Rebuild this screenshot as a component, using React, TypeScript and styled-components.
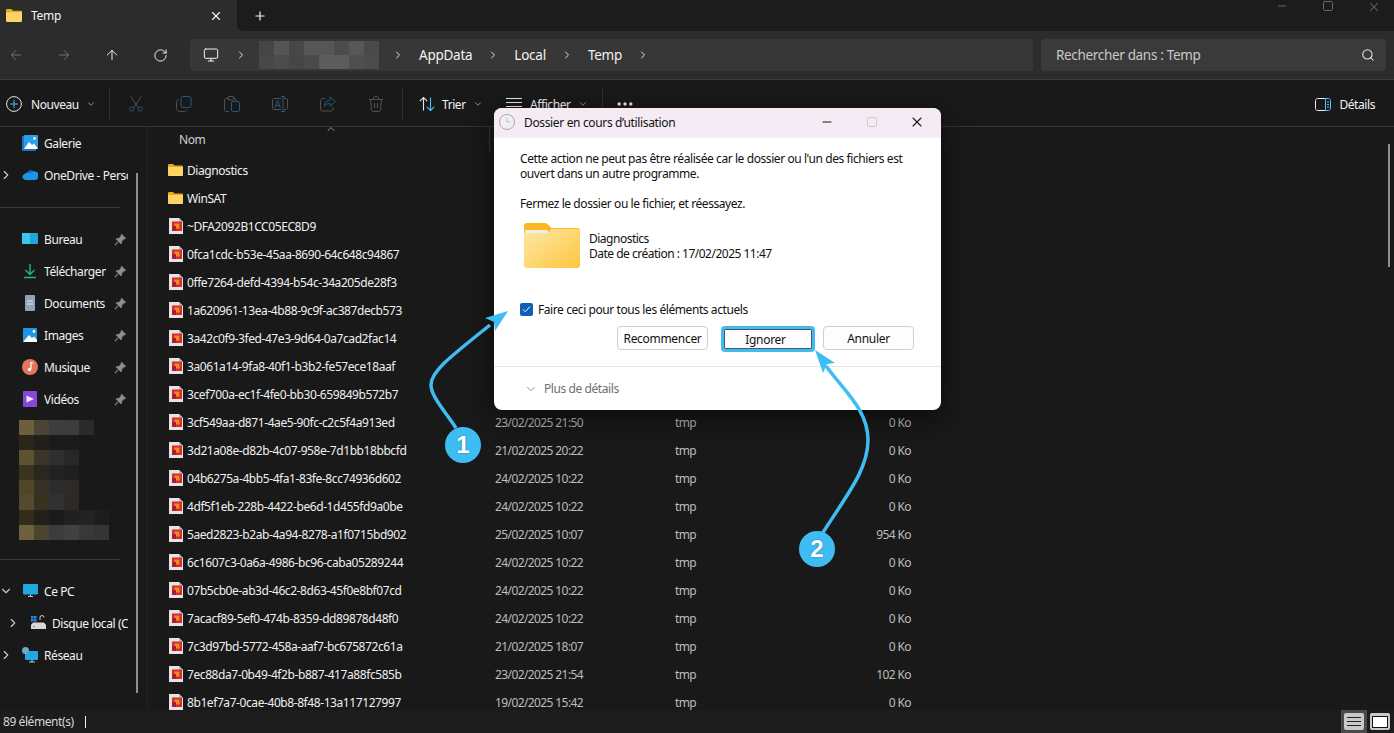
import React from 'react';
import styled, { createGlobalStyle } from 'styled-components';
import {
  ArrowLeft,
  ArrowRight,
  ArrowUp,
  ChevronDown,
  ChevronRight,
  ChevronUp,
  Minus,
  Monitor,
  MoreHorizontal,
  Plus,
  RotateCw,
  Search,
  Square,
  X,
} from 'lucide-react';

const GlobalStyle = createGlobalStyle`
  html, body, #root { margin: 0; height: 100%; }
  body {
    background: #191919;
    font-family: "Noto Sans", "Open Sans", "Liberation Sans", sans-serif;
    font-size: 12px;
    letter-spacing: -0.42px;
    color: #f2f2f2;
    overflow: hidden;
  }
`;

const Window = styled.div`
  position: relative;
  display: flex;
  flex-direction: column;
  width: 1394px;
  height: 733px;
  overflow: hidden;
`;

/* title strip */
const TabStrip = styled.div`
  display: flex;
  height: 31px;
  background: #2c2c2c;
`;

const Tab = styled.div`
  display: flex;
  align-items: center;
  width: 237px;
  padding: 0 14px 0 6px;
  box-sizing: border-box;
  gap: 9px;
  color: #f5f5f5;
  background: #2c2c2c;
  letter-spacing: -0.25px;
`;

const TabTitle = styled.span`
  flex: 1;
`;

const StripRest = styled.div`
  flex: 1;
  display: flex;
  align-items: flex-start;
  background: #1c1c1c;
  border-radius: 0 0 0 6px;
  color: #f5f5f5;
`;

const NewTab = styled.div`
  display: flex;
  align-items: center;
  justify-content: center;
  width: 46px;
  height: 31px;
`;

const WindowControls = styled.div`
  margin-left: auto;
  display: flex;
  gap: 6px;
  color: #6a6a6a;
`;

const WindowControl = styled.div`
  display: flex;
  justify-content: center;
  width: 40px;
  height: 12px;
`;

/* address bar */
const NavBar = styled.div`
  display: flex;
  align-items: center;
  height: 48px;
  padding: 0 8px 0 0;
  background: #2c2c2c;
  border-bottom: 1px solid #3b3b3b;
`;

const NavButtons = styled.div`
  display: flex;
  margin-left: -8px;
`;

const NavButton = styled.div<{ $off?: boolean }>`
  display: flex;
  align-items: center;
  justify-content: center;
  width: 48px;
  color: ${(p) => (p.$off ? '#6f6f6f' : '#ececec')};
`;

const AddressBar = styled.div`
  flex: 1;
  display: flex;
  align-items: center;
  height: 32px;
  margin: 0 8px 0 6px;
  padding-left: 13px;
  background: #373737;
  border-radius: 4px;
  font-size: 13.5px;
  letter-spacing: -0.25px;
  color: #f2f2f2;
`;

const Crumb = styled.span`
  margin: 0 15px;
`;

const CrumbArrow = styled(ChevronRight)<{ $before?: number }>`
  flex: none;
  margin-left: ${(p) => p.$before ?? 0}px;
  color: #e0e0e0;
`;

const Mosaic = styled.div<{ $cols: number; $size: number; $height: number }>`
  display: grid;
  grid-template-columns: repeat(${(p) => p.$cols}, ${(p) => p.$size}px);
  grid-auto-rows: ${(p) => p.$height}px;
`;

const CrumbMosaic = styled(Mosaic)`
  margin: 0 13px 0 12px;
`;

const Pixel = styled.div<{ $color: string }>`
  background: ${(p) => p.$color};
`;

const SearchBox = styled.div`
  display: flex;
  align-items: center;
  justify-content: space-between;
  width: 345px;
  height: 32px;
  padding: 0 11px 0 15px;
  box-sizing: border-box;
  background: #3a3a3a;
  border-radius: 4px;
  font-size: 13.5px;
  letter-spacing: -0.33px;
  color: #c9c9c9;
`;

/* command bar */
const Toolbar = styled.div`
  display: flex;
  align-items: center;
  height: 44px;
  padding-top: 2px;
  background: #191919;
  border-bottom: 1px solid #333;
`;

const Divider = styled.div`
  width: 1px;
  height: 32px;
  margin: 0 2px;
  background: #2e2e2e;
`;

const ToolText = styled.div<{ $width?: number; $pad?: number; $gap?: number; $end?: number }>`
  display: flex;
  align-items: center;
  gap: ${(p) => p.$gap ?? 5}px;
  width: ${(p) => (p.$width ? `${p.$width}px` : 'auto')};
  padding: 0 ${(p) => p.$end ?? 0}px 0 ${(p) => p.$pad ?? 0}px;
  box-sizing: border-box;
  color: #f2f2f2;
`;

const ToolLabel = styled.span<{ $before?: number }>`
  margin-left: ${(p) => p.$before ?? 0}px;
`;

const Caret = styled(ChevronDown)`
  color: #a8a8a8;
  margin-left: 2px;
`;

const ToolIcon = styled.div<{ $shift?: number }>`
  display: flex;
  align-items: center;
  justify-content: center;
  width: 48px;
  margin-left: ${(p) => p.$shift ?? 0}px;
`;

const Spacer = styled.div`
  flex: 1;
`;

/* body */
const Main = styled.div`
  flex: 1;
  display: flex;
  min-height: 0;
`;

const Sidebar = styled.nav`
  position: relative;
  flex: none;
  width: 147px;
  border-right: 1px solid #242424;
  box-sizing: content-box;
  overflow: hidden;
`;

const SideList = styled.div`
  width: 128px;
`;

const SideItem = styled.div<{ $indent?: number }>`
  position: relative;
  display: flex;
  align-items: center;
  height: 32px;
  padding-left: ${(p) => 22 + (p.$indent ?? 0)}px;
  gap: 6px;
  box-sizing: border-box;
  color: #f2f2f2;
`;

const Expander = styled.span<{ $indent?: number }>`
  position: absolute;
  left: ${(p) => (p.$indent ?? 0) - 1}px;
  display: flex;
  color: #c8c8c8;
`;

const SideLabel = styled.span`
  flex: 1;
  min-width: 0;
  overflow: hidden;
  white-space: nowrap;
`;

const PinSlot = styled.span`
  flex: none;
  display: flex;
  width: 16px;
  justify-content: center;
`;

const SideRule = styled.div`
  width: 120px;
  height: 1px;
  margin: 16px 0 15px;
  background: #3a3a3a;
`;

const BlurBlock = styled.div`
  height: 128px;
  padding: 5px 0 0 19px;
  box-sizing: border-box;
`;

const Scrollbar = styled.div<{ $top: number; $height: number; $right: number }>`
  position: absolute;
  top: ${(p) => p.$top}px;
  right: ${(p) => p.$right}px;
  width: 2px;
  height: ${(p) => p.$height}px;
  background: #8f8f8f;
`;

const Content = styled.section`
  position: relative;
  flex: 1;
  min-width: 0;
  overflow: hidden;
`;

const HeaderRow = styled.div`
  position: relative;
  height: 26px;
  padding-left: 31px;
  line-height: 26px;
  color: #d0d0d0;
`;

const SortCaret = styled(ChevronUp)`
  position: absolute;
  left: 177px;
  top: -4px;
  color: #b8b8b8;
`;

const ColumnEdge = styled.div`
  position: absolute;
  left: 341px;
  top: 0;
  width: 1px;
  height: 26px;
  background: #3a3a3a;
`;

const FileRows = styled.div`
  padding-top: 3px;
`;

const FileRow = styled.div`
  display: grid;
  grid-template-columns: 19px 308px 180px 150px 86px;
  align-items: center;
  height: 28px;
  padding-left: 20px;
  white-space: nowrap;
`;

const FileName = styled.span`
  color: #f0f0f0;
`;

const FileMeta = styled.span<{ $right?: boolean }>`
  color: #bdbdbd;
  letter-spacing: -0.6px;
  text-align: ${(p) => (p.$right ? 'right' : 'left')};
`;

/* status bar */
const StatusBar = styled.div`
  display: flex;
  align-items: center;
  height: 23px;
  padding-left: 3px;
  background: #1c1c1c;
  color: #d8d8d8;
`;

const StatusBreak = styled.div`
  width: 1px;
  height: 12px;
  margin-left: 11px;
  background: #f0f0f0;
`;

const ViewButton = styled.div<{ $active?: boolean }>`
  display: flex;
  align-items: center;
  justify-content: center;
  width: ${(p) => (p.$active ? 26 : 24)}px;
  height: 23px;
  margin-right: ${(p) => (p.$active ? 1 : 2)}px;
  background: ${(p) => (p.$active ? '#4a4a4a' : 'transparent')};
`;

const ViewGlyph = styled.div`
  display: flex;
  align-items: center;
  justify-content: center;
  width: 20px;
  height: 17px;
  border-radius: 2px;
  background: #c8c8c8;
`;

const PaneGlyph = styled.div`
  width: 14px;
  height: 10px;
  background: #fff;
  border: 1px solid #111;
`;

/* dialog */
const Dialog = styled.div`
  position: absolute;
  left: 494px;
  top: 108px;
  width: 447px;
  background: #fff;
  border-radius: 8px;
  overflow: hidden;
  color: #111;
  box-shadow: 0 8px 28px rgba(0, 0, 0, 0.55);
`;

const DialogTitle = styled.div`
  display: flex;
  align-items: center;
  height: 30px;
  padding: 0 2px 2px 5px;
  box-sizing: border-box;
  gap: 9px;
  background: #f4ebf5;
  color: #111;
  letter-spacing: -0.35px;
`;

const DialogTitleText = styled.span`
  flex: 1;
`;

const DialogControls = styled.div`
  display: flex;
`;

const DialogControl = styled.div<{ $off?: boolean }>`
  display: flex;
  align-items: center;
  justify-content: center;
  width: 45px;
  color: ${(p) => (p.$off ? '#c8c8c8' : '#1a1a1a')};
`;

const DialogBody = styled.div`
  padding: 13px 27px 16px 26px;
  line-height: 15px;
`;

const Message = styled.p<{ $gap?: number }>`
  margin: ${(p) => p.$gap ?? 0}px 0 0;
  white-space: nowrap;
`;

const ItemInfo = styled.div`
  display: flex;
  align-items: center;
  gap: 9px;
  margin: 12px 0 0 4px;
  letter-spacing: -0.5px;
`;

const CheckRow = styled.label`
  display: flex;
  align-items: center;
  gap: 5px;
  margin-top: 34px;
  height: 14px;
`;

const CheckBox = styled.span`
  display: flex;
  align-items: center;
  justify-content: center;
  width: 13px;
  height: 13px;
  border-radius: 2px;
  background: #0f5fb8;
`;

const ButtonRow = styled.div`
  display: flex;
  justify-content: flex-end;
  align-items: flex-start;
  margin-top: 10px;
  height: 24px;
`;

const DialogButton = styled.div<{ $marked?: boolean }>`
  display: flex;
  align-items: center;
  justify-content: center;
  box-sizing: border-box;
  width: ${(p) => (p.$marked ? 94 : 91)}px;
  height: ${(p) => (p.$marked ? 26 : 24)}px;
  margin: ${(p) => (p.$marked ? '0 8px 0 13px' : 0)};
  padding-right: ${(p) => (p.$marked ? 5 : 0)}px;
  border: ${(p) => (p.$marked ? '3px solid #3fbdf3' : '1px solid #cfcfcf')};
  border-radius: 4px;
  background: #fdfdfd;
  letter-spacing: -0.3px;
  box-shadow: ${(p) => (p.$marked ? 'inset 0 0 0 1px #555' : 'none')};
`;

const DialogFooter = styled.div`
  display: flex;
  align-items: center;
  height: 43px;
  padding-left: 30px;
  gap: 6px;
  border-top: 1px solid #e6e6e6;
  color: #6e6e6e;
`;

/* annotation overlay */
const Annotation = styled.svg`
  position: absolute;
  left: 0;
  top: 0;
  width: 1394px;
  height: 733px;
  pointer-events: none;
`;

const Badge = styled.div<{ $x: number; $y: number }>`
  position: absolute;
  left: ${(p) => p.$x - 18}px;
  top: ${(p) => p.$y - 18}px;
  display: flex;
  align-items: center;
  justify-content: center;
  width: 36px;
  height: 36px;
  border-radius: 50%;
  background: #3fbdf3;
  color: #fff;
  font-family: "Liberation Sans", sans-serif;
  font-size: 24px;
  font-weight: 700;
  letter-spacing: 0;
  text-shadow: 0 0 2px rgba(0, 60, 90, 0.5);
`;

/* drawn icons */
const FolderIcon = ({ width = 15, height = 12 }: { width?: number; height?: number }) => (
  <svg width={width} height={height} viewBox="1 2.600 14 11.200" preserveAspectRatio="none">
    <path d="M1 3.600C1 3 1.400 2.600 2 2.600h3.600l1.600 1.400H14c.6 0 1 .4 1 1v1H1z" fill="#e9a91c" />
    <path d="M1 5.400h14v7.400c0 .6-.4 1-1 1H2c-.6 0-1-.4-1-1z" fill="#fcd364" />
  </svg>
);

const BigFolder = () => (
  <svg width="56" height="45" viewBox="0 0 56 45">
    <defs>
      <linearGradient id="bigFolder" x1="0" y1="0" x2="1" y2="1">
        <stop offset="0" stopColor="#fde8a8" />
        <stop offset="1" stopColor="#fdc63c" />
      </linearGradient>
    </defs>
    <path d="M0 3c0-2 1-3 3-3h17c2 0 3 .6 4.500 2l3 3H53c2 0 3 1 3 3v6H0z" fill="#fcb81e" />
    <rect x="1" y="7" width="23" height="3" fill="#eee" />
    <path d="M0 10h24l3-4h26c2 0 3 1 3 3v33c0 2-1 3-3 3H3c-2 0-3-1-3-3z" fill="url(#bigFolder)" />
  </svg>
);

const TmpIcon = () => (
  <svg width="16" height="16" viewBox="0 0 16 16">
    <path d="M1 0h10l4 4v12H1z" fill="#e4e4e4" />
    <path d="M11 0l4 4h-4z" fill="#bdbdbd" />
    <rect x="4" y="3.500" width="10" height="9.500" fill="#d92b2b" />
    <rect x="6.500" y="5.500" width="5" height="5" fill="#f08a24" />
    <rect x="4" y="8" width="4" height="5" fill="#a81e2e" />
  </svg>
);

const PinIcon = () => (
  <svg width="13" height="13" viewBox="0 0 12 12">
    <path d="M7 .8l4.200 4.200-1 .8-.8-.2L7.200 7.800l.2 1.600-1 1L1.600 5.600l1-1 1.600.2L6.400 2.600l-.2-.8z" fill="#8c8c8c" />
    <path d="M3.500 8.500L.8 11.200" stroke="#8c8c8c" />
  </svg>
);

const GalleryIcon = () => (
  <svg width="16" height="16" viewBox="0 0 16 16">
    <rect x="0" y="1" width="14" height="15" rx="1" fill="#1b74c8" />
    <rect x="2" y="0" width="14" height="14" rx="1" fill="#2aa0ea" />
    <path d="M2 14l5-7 3 3 2-1.500L16 14z" fill="#fff" />
    <circle cx="12.500" cy="3.500" r="1.300" fill="#fff" />
  </svg>
);

const ImagesIcon = () => (
  <svg width="16" height="16" viewBox="0 0 16 16">
    <rect x="1" y="1" width="14" height="14" rx="1" fill="#2294e6" />
    <path d="M1 15l6-7 3 3 2-1.500 3 3.500v2z" fill="#fff" />
    <circle cx="12" cy="4.500" r="1.400" fill="#fff" />
  </svg>
);

const CloudIcon = () => (
  <svg width="16" height="16" viewBox="0 0 16 16">
    <path d="M6 4.500a4 4 0 0 1 6.800 1.500A3 3 0 0 1 16 9l-4-.5L8 6z" fill="#0f6fc6" />
    <path d="M3.300 13A3.200 3.200 0 0 1 3 6.700 4 4 0 0 1 9 6.500 3.500 3.500 0 0 1 16 10c0 1.800-1 3-3 3z" fill="#1f95e8" />
  </svg>
);

const DesktopIcon = () => (
  <svg width="16" height="16" viewBox="0 0 16 16">
    <rect x="0" y="2" width="16" height="11" rx="1" fill="#1fa6dc" />
    <rect x="0" y="2" width="8" height="11" fill="#3cc4ec" />
  </svg>
);

const DownloadIcon = () => (
  <svg width="16" height="16" viewBox="0 0 16 16" fill="none" stroke="#22b58a" strokeWidth="1.400">
    <path d="M8 1v10M3.500 7L8 11.500 12.500 7M2 14.500h12" />
  </svg>
);

const DocsIcon = () => (
  <svg width="16" height="16" viewBox="0 0 16 16">
    <rect x="3" y="0" width="10" height="16" rx="1" fill="#8ca3b8" />
    <path d="M5 6h6M5 9h6" stroke="#e6edf2" />
  </svg>
);

const MusicIcon = () => (
  <svg width="16" height="16" viewBox="0 0 16 16">
    <circle cx="8" cy="8" r="8" fill="#e07560" />
    <path d="M9 3v7" stroke="#fff" strokeWidth="1.200" />
    <path d="M9 3l2.500 1.500" stroke="#fff" />
    <circle cx="7.500" cy="10.500" r="1.700" fill="#fff" />
  </svg>
);

const VideoIcon = () => (
  <svg width="16" height="16" viewBox="0 0 16 16">
    <rect x="1" y="0" width="14" height="16" rx="1" fill="#8548d8" />
    <path d="M4.500 4.500L12 8l-7.500 3.500z" fill="#efe4ff" />
  </svg>
);

const PcIcon = () => (
  <svg width="16" height="16" viewBox="0 0 16 16">
    <rect x="1" y="1" width="15" height="10.500" rx="1" fill="#21a8e0" />
    <path d="M6 13.500h5M8.500 11.500v2" stroke="#b8c4cc" strokeWidth="1.200" />
  </svg>
);

const DriveIcon = () => (
  <svg width="16" height="16" viewBox="0 0 16 16">
    <rect x="1" y="1" width="2.500" height="2.500" fill="#2a8ce0" />
    <rect x="4" y="1" width="2.500" height="2.500" fill="#2a8ce0" />
    <rect x="1" y="4" width="2.500" height="2.500" fill="#2a8ce0" />
    <rect x="4" y="4" width="2.500" height="2.500" fill="#2a8ce0" />
    <path d="M10 5V2.500a2 2 0 0 1 4 0" fill="none" stroke="#ccc" />
    <path d="M1 10l2-2.500h11l2 2.500v4H1z" fill="#d8d8d8" />
    <rect x="3" y="11" width="2" height="1" fill="#48c048" />
  </svg>
);

const NetworkIcon = () => (
  <svg width="16" height="16" viewBox="0 0 16 16">
    <rect x="3" y="4" width="13" height="9" rx="1" fill="#21a8e0" />
    <path d="M7 15h6M10 13v2" stroke="#b8c4cc" strokeWidth="1.200" />
    <circle cx="3.500" cy="3.500" r="3.500" fill="#6fa8c8" />
  </svg>
);

const ClockIcon = () => (
  <svg width="16" height="16" viewBox="0 0 16 16">
    <circle cx="8" cy="8" r="7.500" fill="#f0f0f0" stroke="#a8a8a8" />
    <path d="M8 3.500V8h3" fill="none" stroke="#bbb" />
  </svg>
);

const GREY = '#505050';
const DIMBLUE = '#24577a';

const CutIcon = () => (
  <svg width="16" height="16" viewBox="0 0 16 16" fill="none" strokeWidth="1">
    <path d="M3 .5l7 11M13 .5l-7 11" stroke={GREY} />
    <circle cx="3.800" cy="13" r="2.200" stroke={DIMBLUE} />
    <circle cx="12.200" cy="13" r="2.200" stroke={DIMBLUE} />
  </svg>
);

const CopyIcon = () => (
  <svg width="16" height="16" viewBox="0 0 16 16" fill="none" strokeWidth="1">
    <rect x="5" y=".5" width="10" height="11" rx="2" stroke={DIMBLUE} />
    <path d="M3 3.500c-1.500.5-2.500 1-2.500 3v6c0 1.500 1 3 3 3h5c1.500 0 2.500-1 3-2" stroke={GREY} />
  </svg>
);

const PasteIcon = () => (
  <svg width="16" height="16" viewBox="0 0 16 16" fill="none" strokeWidth="1">
    <path d="M5 2.500H2c-1 0-1.500.5-1.500 1.500v10c0 1 .5 1.500 1.500 1.500h3M12 5V4c0-1-.5-1.500-1.500-1.500H9" stroke={GREY} />
    <rect x="4" y=".5" width="6" height="3.500" rx="1" stroke={GREY} />
    <rect x="7.500" y="5.500" width="8" height="10" rx="1.500" stroke={DIMBLUE} />
  </svg>
);

const RenameIcon = () => (
  <svg width="16" height="16" viewBox="0 0 16 16" fill="none" strokeWidth="1">
    <path d="M9 2.500H2C1 2.500.5 3 .5 4v8c0 1 .5 1.500 1.500 1.500h7M12 2.500h2c1 0 1.500.5 1.500 1.500v8c0 1-.5 1.500-1.500 1.500h-2" stroke={GREY} />
    <path d="M9 .5h4M9 15.500h4M11 .5v15" stroke={DIMBLUE} />
    <text x="2.500" y="11.500" fontSize="10" fill={DIMBLUE} stroke="none" fontFamily="Noto Sans">A</text>
  </svg>
);

const ShareIcon = () => (
  <svg width="16" height="16" viewBox="0 0 16 16" fill="none" strokeWidth="1">
    <path d="M5 2.500H2.500c-1 0-2 .5-2 2v8.500c0 1.500 1 2 2 2h8.500c1 0 2-.5 2-2v-2" stroke={GREY} />
    <path d="M10 .8l5.500 4.700-5.500 4.700V7.500c-3 0-4.500 1-5.500 3 0-4 2-6 5.500-6.500z" stroke={DIMBLUE} />
  </svg>
);

const TrashIcon = () => (
  <svg width="16" height="16" viewBox="0 0 16 16" fill="none" stroke={GREY} strokeWidth="1">
    <path d="M1 3.500h14M5.500 3.500V2c0-1 .5-1.500 1.500-1.500h2c1 0 1.500.5 1.500 1.500v1.500" />
    <path d="M2.500 3.500l1 10.500c.1 1 .7 1.500 1.500 1.500h6c.8 0 1.400-.5 1.500-1.500l1-10.500M6.500 7v5M9.500 7v5" />
  </svg>
);

const SortIcon = () => (
  <svg width="16" height="16" viewBox="0 0 16 16" fill="none" strokeWidth="1.100">
    <path d="M4.500 14.500V1.500M.8 5.200l3.700-3.700 3.700 3.700" stroke="#e8e8e8" />
    <path d="M11.500 1.500v13M7.800 10.800l3.700 3.700 3.700-3.700" stroke="#4cc2ff" />
  </svg>
);

const ViewIcon = () => (
  <svg width="16" height="12" viewBox="0 0 16 12" stroke="#e8e8e8" strokeWidth="1">
    <path d="M0 .5h16M0 4.500h16M0 8.500h16" />
  </svg>
);

const DetailsIcon = () => (
  <svg width="16" height="13" viewBox="0 0 16 13" fill="none" strokeWidth="1">
    <path d="M10.500.5H2.500c-1 0-2 1-2 2v8c0 1 1 2 2 2h8" stroke="#e8e8e8" />
    <path d="M10.500.5h3c1 0 2 1 2 2v8c0 1-1 2-2 2h-3zM12 4h2M12 6.500h2M12 9h2" stroke="#4cc2ff" />
  </svg>
);

const NewIcon = () => (
  <svg width="16" height="16" viewBox="0 0 16 16" fill="none" strokeWidth="1">
    <circle cx="8" cy="8" r="7.400" stroke="#e8e8e8" />
    <path d="M8 4v8M4 8h8" stroke="#4cc2ff" />
  </svg>
);

const ListGlyph = () => (
  <svg width="14" height="9" viewBox="0 0 14 9" stroke="#222" strokeWidth="1">
    <path d="M0 .5h14M0 4.500h14M0 8.500h14" />
  </svg>
);

const breadcrumbPixels = [
  '#454545', '#555', '#474747', '#565656', '#565656', '#4c4c4c', '#575757', '#4a4a4a',
  '#484848', '#4c4c4c', '#464646', '#4a4a4a', '#5c5c5c', '#5c5c5c', '#4f4f4f', '#4c4c4c',
];

const sidebarPixels = [
  ['#6e5f3c', '#4a4436', '#3d3d3d', '#3c3c3c', '#2a2a2a', '#191919', '#191919'],
  ['#2a2619', '#211f1a', '#1b1b1b', '#1b1b1b', '#191919', '#191919', '#191919'],
  ['#5e5233', '#3a3528', '#2e2f31', '#272727', '#191919', '#191919', '#191919'],
  ['#3a331f', '#2a271e', '#222223', '#201f1e', '#191919', '#191919', '#191919'],
  ['#4f4529', '#363026', '#2d2c2c', '#2d2a28', '#191919', '#191919', '#191919'],
  ['#544a2d', '#37321f', '#313133', '#2c2927', '#191919', '#191919', '#191919'],
  ['#332c1b', '#22201a', '#1b1b1d', '#212121', '#232323', '#1d1d1d', '#191919'],
  ['#6e603c', '#4a4431', '#3c3b40', '#414141', '#38383b', '#353535', '#191919'],
].flat();

type Row = { name: string; folder?: boolean; date?: string; size?: string };

const rows: Row[] = [
  { name: 'Diagnostics', folder: true },
  { name: 'WinSAT', folder: true },
  { name: '~DFA2092B1CC05EC8D9' },
  { name: '0fca1cdc-b53e-45aa-8690-64c648c94867' },
  { name: '0ffe7264-defd-4394-b54c-34a205de28f3' },
  { name: '1a620961-13ea-4b88-9c9f-ac387decb573' },
  { name: '3a42c0f9-3fed-47e3-9d64-0a7cad2fac14' },
  { name: '3a061a14-9fa8-40f1-b3b2-fe57ece18aaf' },
  { name: '3cef700a-ec1f-4fe0-bb30-659849b572b7' },
  { name: '3cf549aa-d871-4ae5-90fc-c2c5f4a913ed', date: '23/02/2025 21:50', size: '0 Ko' },
  { name: '3d21a08e-d82b-4c07-958e-7d1bb18bbcfd', date: '21/02/2025 20:22', size: '0 Ko' },
  { name: '04b6275a-4bb5-4fa1-83fe-8cc74936d602', date: '24/02/2025 10:22', size: '0 Ko' },
  { name: '4df5f1eb-228b-4422-be6d-1d455fd9a0be', date: '24/02/2025 10:22', size: '0 Ko' },
  { name: '5aed2823-b2ab-4a94-8278-a1f0715bd902', date: '25/02/2025 10:07', size: '954 Ko' },
  { name: '6c1607c3-0a6a-4986-bc96-caba05289244', date: '24/02/2025 10:22', size: '0 Ko' },
  { name: '07b5cb0e-ab3d-46c2-8d63-45f0e8bf07cd', date: '24/02/2025 10:22', size: '0 Ko' },
  { name: '7acacf89-5ef0-474b-8359-dd89878d48f0', date: '24/02/2025 10:22', size: '0 Ko' },
  { name: '7c3d97bd-5772-458a-aaf7-bc675872c61a', date: '21/02/2025 18:07', size: '0 Ko' },
  { name: '7ec88da7-0b49-4f2b-b887-417a88fc585b', date: '23/02/2025 21:54', size: '102 Ko' },
  { name: '8b1ef7a7-0cae-40b8-8f48-13a117127997', date: '19/02/2025 15:42', size: '0 Ko' },
];

const quickAccess = [
  { label: 'Bureau', icon: <DesktopIcon /> },
  { label: 'Téléchargements', icon: <DownloadIcon /> },
  { label: 'Documents', icon: <DocsIcon /> },
  { label: 'Images', icon: <ImagesIcon /> },
  { label: 'Musique', icon: <MusicIcon /> },
  { label: 'Vidéos', icon: <VideoIcon /> },
];

function App() {
  return (
    <Window>
      <GlobalStyle />
      <TabStrip>
        <Tab>
          <FolderIcon width={16} height={13} />
          <TabTitle>Temp</TabTitle>
          <X size={14} strokeWidth={2} />
        </Tab>
        <StripRest>
          <NewTab>
            <Plus size={14} strokeWidth={2} />
          </NewTab>
          <WindowControls>
            <WindowControl>
              <Minus size={12} strokeWidth={2} />
            </WindowControl>
            <WindowControl>
              <Square size={12} strokeWidth={2} />
            </WindowControl>
            <WindowControl>
              <X size={14} strokeWidth={1.8} />
            </WindowControl>
          </WindowControls>
        </StripRest>
      </TabStrip>

      <NavBar>
        <NavButtons>
          <NavButton $off><ArrowLeft size={16} strokeWidth={1.5} /></NavButton>
          <NavButton $off><ArrowRight size={16} strokeWidth={1.5} /></NavButton>
          <NavButton><ArrowUp size={16} strokeWidth={1.5} /></NavButton>
          <NavButton><RotateCw size={15} strokeWidth={1.6} /></NavButton>
        </NavButtons>
        <AddressBar>
          <Monitor size={16} strokeWidth={1.5} />
          <CrumbArrow size={12} $before={16} />
          <CrumbMosaic $cols={8} $size={15} $height={14}>
            {breadcrumbPixels.map((c, i) => <Pixel key={i} $color={c} />)}
          </CrumbMosaic>
          <CrumbArrow size={12} />
          <Crumb>AppData</Crumb>
          <CrumbArrow size={12} />
          <Crumb>Local</Crumb>
          <CrumbArrow size={12} />
          <Crumb>Temp</Crumb>
          <CrumbArrow size={12} />
        </AddressBar>
        <SearchBox>
          Rechercher dans : Temp
          <Search size={14} strokeWidth={1.8} color="#e8e8e8" />
        </SearchBox>
      </NavBar>

      <Toolbar>
        <ToolText $width={107} $pad={6}>
          <NewIcon />
          <ToolLabel $before={4}>Nouveau</ToolLabel>
          <Caret size={10} />
        </ToolText>
        <Divider />
        <ToolIcon><CutIcon /></ToolIcon>
        <ToolIcon><CopyIcon /></ToolIcon>
        <ToolIcon><PasteIcon /></ToolIcon>
        <ToolIcon><RenameIcon /></ToolIcon>
        <ToolIcon><ShareIcon /></ToolIcon>
        <ToolIcon><TrashIcon /></ToolIcon>
        <Divider />
        <ToolText $width={87} $pad={14}>
          <SortIcon />
          <ToolLabel $before={2}>Trier</ToolLabel>
          <Caret size={10} />
        </ToolText>
        <ToolText $width={108} $pad={14}>
          <ViewIcon />
          <ToolLabel $before={3}>Afficher</ToolLabel>
          <Caret size={10} />
        </ToolText>
        <Divider />
        <ToolIcon $shift={-4}><MoreHorizontal size={20} strokeWidth={2} color="#e8e8e8" /></ToolIcon>
        <Spacer />
        <ToolText $end={19} $gap={8}>
          <DetailsIcon />
          <span>Détails</span>
        </ToolText>
      </Toolbar>

      <Main>
        <Sidebar>
          <SideList>
            <SideItem><GalleryIcon /><SideLabel>Galerie</SideLabel></SideItem>
            <SideItem>
              <Expander $indent={0}><ChevronRight size={14} strokeWidth={2} /></Expander>
              <CloudIcon /><SideLabel>OneDrive - Personnel</SideLabel>
            </SideItem>
            <SideRule />
            {quickAccess.map((item) => (
              <SideItem key={item.label}>
                {item.icon}
                <SideLabel>{item.label}</SideLabel>
                <PinSlot><PinIcon /></PinSlot>
              </SideItem>
            ))}
            <BlurBlock>
              <Mosaic $cols={7} $size={15} $height={15}>
                {sidebarPixels.map((c, i) => <Pixel key={i} $color={c} />)}
              </Mosaic>
            </BlurBlock>
            <SideRule />
            <SideItem>
              <Expander $indent={0}><ChevronDown size={14} strokeWidth={2} /></Expander>
              <PcIcon /><SideLabel>Ce PC</SideLabel>
            </SideItem>
            <SideItem $indent={8}>
              <Expander $indent={7}><ChevronRight size={14} strokeWidth={2} /></Expander>
              <DriveIcon /><SideLabel>Disque local (C:)</SideLabel>
            </SideItem>
            <SideItem>
              <Expander $indent={0}><ChevronRight size={14} strokeWidth={2} /></Expander>
              <NetworkIcon /><SideLabel>Réseau</SideLabel>
            </SideItem>
          </SideList>
          <Scrollbar $top={46} $height={520} $right={9} />
        </Sidebar>

        <Content>
          <HeaderRow>
            Nom
            <SortCaret size={12} strokeWidth={1.5} />
            <ColumnEdge />
          </HeaderRow>
          <FileRows>
            {rows.map((row) => (
              <FileRow key={row.name}>
                {row.folder ? <FolderIcon /> : <TmpIcon />}
                <FileName>{row.name}</FileName>
                <FileMeta>{row.date}</FileMeta>
                <FileMeta>{row.date ? 'tmp' : ''}</FileMeta>
                <FileMeta $right>{row.size}</FileMeta>
              </FileRow>
            ))}
          </FileRows>
          <Scrollbar $top={17} $height={123} $right={4} />
        </Content>
      </Main>

      <StatusBar>
        89 élément(s)
        <StatusBreak />
        <Spacer />
        <ViewButton $active><ViewGlyph><ListGlyph /></ViewGlyph></ViewButton>
        <ViewButton><ViewGlyph><PaneGlyph /></ViewGlyph></ViewButton>
      </StatusBar>

      <Dialog>
        <DialogTitle>
          <ClockIcon />
          <DialogTitleText>Dossier en cours d’utilisation</DialogTitleText>
          <DialogControls>
            <DialogControl><Minus size={14} strokeWidth={1.8} /></DialogControl>
            <DialogControl $off><Square size={12} strokeWidth={1.8} /></DialogControl>
            <DialogControl><X size={16} strokeWidth={1.6} /></DialogControl>
          </DialogControls>
        </DialogTitle>
        <DialogBody>
          <Message>
            Cette action ne peut pas être réalisée car le dossier ou l'un des fichiers est
            <br />
            ouvert dans un autre programme.
          </Message>
          <Message $gap={15}>Fermez le dossier ou le fichier, et réessayez.</Message>
          <ItemInfo>
            <BigFolder />
            <div>
              Diagnostics
              <br />
              Date de création : 17/02/2025 11:47
            </div>
          </ItemInfo>
          <CheckRow>
            <CheckBox>
              <svg width="9" height="8" viewBox="0 0 9 8" fill="none" stroke="#fff" strokeWidth="1">
                <path d="M1 4.500l2.200 2.200L8 1.500" />
              </svg>
            </CheckBox>
            Faire ceci pour tous les éléments actuels
          </CheckRow>
          <ButtonRow>
            <DialogButton>Recommencer</DialogButton>
            <DialogButton $marked>Ignorer</DialogButton>
            <DialogButton>Annuler</DialogButton>
          </ButtonRow>
        </DialogBody>
        <DialogFooter>
          <ChevronDown size={14} strokeWidth={1.6} color="#8a8a8a" />
          Plus de détails
        </DialogFooter>
      </Dialog>

      <Annotation viewBox="0 0 1394 733">
        <path
          d="M456 428C444 410 431 396 431 385C431 372 446 360 490 325"
          fill="none"
          stroke="#3fbdf3"
          strokeWidth="3.500"
        />
        <path d="M508 311L485 318L494 322L495 331z" fill="#3fbdf3" />
        <path
          d="M822 534C846 496 868 470 868 440C868 410 845 392 826 366"
          fill="none"
          stroke="#3fbdf3"
          strokeWidth="3.500"
        />
        <path d="M815 350L835 363L827 364L823 373z" fill="#3fbdf3" />
      </Annotation>
      <Badge $x={463} $y={445}>1</Badge>
      <Badge $x={817} $y={549}>2</Badge>
    </Window>
  );
}

export default App;
